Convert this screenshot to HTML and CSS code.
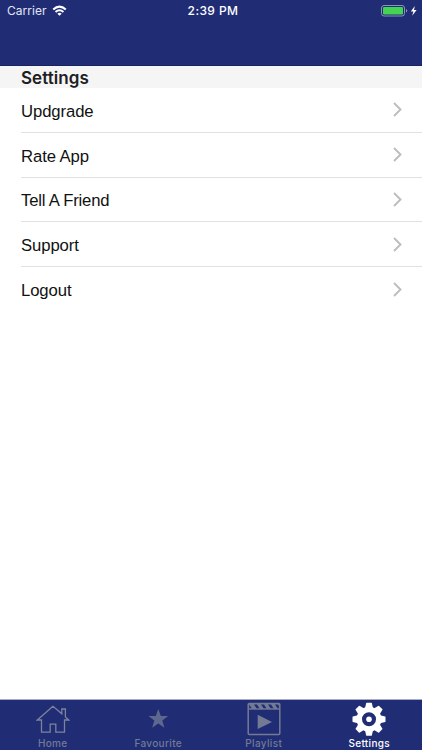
FILE: index.html
```html
<!DOCTYPE html>
<html lang="en">
<head>
<meta charset="utf-8">
<title>Settings</title>
<link rel="stylesheet" href="styles.css">
</head>
<body>
<header class="navbar">
  <div class="status">
    <div class="carrier"><span>Carrier</span>
      <svg width="15" height="12" viewBox="0 0 16 12" fill="none" stroke="#fff" stroke-width="2.2"><path d="M1.3 4.5Q8-1.8 14.7 4.5M3.8 7.1Q8 3.3 12.2 7.1"/><path d="M5.7 8.8Q8 6.9 10.3 8.8L8 11.1Z" fill="#fff" stroke="none"/></svg>
    </div>
    <div class="time">2:39 PM</div>
    <div class="power">
      <svg width="36" height="12" viewBox="0 0 36 12"><rect x=".5" y=".5" width="23" height="10.5" rx="2.5" fill="none" stroke="#8993bd"/><rect x="2" y="2" width="20" height="7.5" rx="1.2" fill="#43d551"/><path d="M25 4v3.5q1.3-.4 1.3-1.75T25 4Z" fill="#8993bd"/><path d="M33.8 1 29.8 6.5h2.6l-1.2 4.2L35.6 5H33Z" fill="#fff"/></svg>
    </div>
  </div>
</header>
<main class="content">
  <h1 class="section">Settings</h1>
  <ul class="list">
    <li class="row"><span>Updgrade</span><svg class="chevron" viewBox="0 0 9 15"><path d="m1 1 6.5 6.5L1 14"/></svg></li>
    <li class="row"><span>Rate App</span><svg class="chevron" viewBox="0 0 9 15"><path d="m1 1 6.5 6.5L1 14"/></svg></li>
    <li class="row"><span class="tight">Tell A Friend</span><svg class="chevron" viewBox="0 0 9 15"><path d="m1 1 6.5 6.5L1 14"/></svg></li>
    <li class="row"><span>Support</span><svg class="chevron" viewBox="0 0 9 15"><path d="m1 1 6.5 6.5L1 14"/></svg></li>
    <li class="row"><span>Logout</span><svg class="chevron" viewBox="0 0 9 15"><path d="m1 1 6.5 6.5L1 14"/></svg></li>
  </ul>
</main>
<nav class="tabs">
  <div class="tab">
    <svg width="34" height="34" viewBox="0 0 34 34" fill="none" stroke="#7b829c" stroke-width="1.3"><path d="M17 4.3 1.3 18H5.5v12.2h8.7v-8h5.6v8h8.7V18h4.2L29.4 15V7h-3.6v4.8Z"/></svg>
    <span>Home</span>
  </div>
  <div class="tab">
    <svg width="34" height="34" viewBox="0 0 34 34"><path d="m17.3 7 2.5 6.9 7.3.2-5.8 4.5 2.1 7.1-6.1-4.2-6.1 4.2 2.1-7.1-5.8-4.5 7.3-.2Z" fill="#5e688f"/></svg>
    <span>Favourite</span>
  </div>
  <div class="tab">
    <svg width="34" height="34" viewBox="0 0 34 34"><rect x="1.2" y="1.5" width="31.6" height="31" rx="1" fill="none" stroke="#737a94" stroke-width="1.5"/><path d="M1.5 1.5h31v6.2h-31Z" fill="#737a94"/><path d="M2.2 2.5 4.7 6.3H2.2ZM7 2.5h3L12.5 6.3h-3ZM14 2.5h3L19.5 6.3h-3ZM21 2.5h3L26.5 6.3h-3ZM28 2.5h3L31.9 4V6.3h-1.4Z" fill="#202d75"/><path d="M10.7 12.7v14.4L25 19.9Z" fill="#737a94"/></svg>
    <span>Playlist</span>
  </div>
  <div class="tab active">
    <svg width="34" height="34" viewBox="-17 -17.2 34 34" fill="#fff"><defs><path id="tooth" d="M-4.3-10-2.8-16.2Q-2.6-16.5-2.2-16.5H2.2Q2.6-16.5 2.8-16.2L4.3-10Z"/></defs><circle r="9.7" fill="none" stroke="#fff" stroke-width="5.4"/><use href="#tooth"/><use href="#tooth" transform="rotate(45)"/><use href="#tooth" transform="rotate(90)"/><use href="#tooth" transform="rotate(135)"/><use href="#tooth" transform="rotate(180)"/><use href="#tooth" transform="rotate(225)"/><use href="#tooth" transform="rotate(270)"/><use href="#tooth" transform="rotate(315)"/><circle r="2.8"/></svg>
    <span>Settings</span>
  </div>
</nav>
</body>
</html>
```
FILE: styles.css
```css
* { box-sizing: border-box; }
body {
  margin: 0;
  height: 750px;
  display: flex;
  flex-direction: column;
  overflow: hidden;
  background: #fff;
  font-family: "Liberation Sans", sans-serif;
}
.navbar { flex: none; height: 66px; background: #202d75; border-bottom: 1px solid #18245f; }
.status {
  display: grid;
  grid-template-columns: 1fr auto 1fr;
  align-items: center;
  height: 22px;
  padding: 0 5px 0 7px;
  color: #fff;
  font: 12px/22px Inter, sans-serif;
}
.carrier { display: flex; align-items: center; gap: 5px; color: #e3e6f2; letter-spacing: .05px; }
.time { font-weight: 500; letter-spacing: .4px; padding-left: 2px; }
.power { display: flex; justify-content: flex-end; }
.content { flex: 1; }
.section {
  margin: 0;
  height: 22px;
  padding-left: 21px;
  background: #f5f5f5;
  color: #202022;
  font: 600 17px/24px Inter, sans-serif;
  letter-spacing: .05px;
}
.list { list-style: none; margin: 0; padding: 0 0 0 21px; }
.row {
  height: 44.75px;
  display: flex;
  align-items: center;
  justify-content: space-between;
  padding: 0 20px 0 0;
  border-bottom: 1px solid #e1e1e3;
  color: #111;
  font-size: 16.7px;
  letter-spacing: -.1px;
}
.row:last-child { border-bottom: 0; }
.row span { padding-top: 4px; }
.row .tight { letter-spacing: -.2px; }
.chevron { width: 9px; height: 15px; fill: none; stroke: #bdbdc1; stroke-width: 1.9; }
.tabs {
  flex: none;
  height: 51px;
  display: grid;
  grid-template-columns: repeat(4, 1fr);
  background: #202d75;
  border-top: 1px solid #a9adc4;
}
.tab {
  display: flex;
  flex-direction: column;
  align-items: center;
  padding-top: 2px;
  color: #737a94;
  font: 500 10px/14px Inter, sans-serif;
  letter-spacing: .34px;
}
.tab svg { flex: none; }
.active { color: #fff; }
```
